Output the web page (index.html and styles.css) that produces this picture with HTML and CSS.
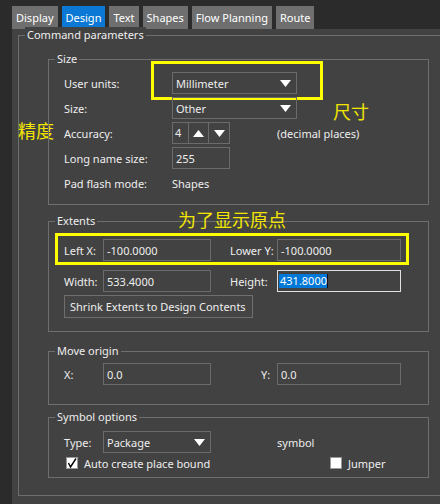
FILE: index.html
```html
<!DOCTYPE html>
<html lang="en">
<head>
    <meta charset="UTF-8">
    <meta name="viewport" content="width=device-width, initial-scale=1.0">
    <title>Design Options</title>
    <link rel="stylesheet" href="styles.css">
</head>
<body>
    <div class="tabs">
        <div class="tab">Display</div>
        <div class="tab active">Design</div>
        <div class="tab">Text</div>
        <div class="tab">Shapes</div>
        <div class="tab">Flow Planning</div>
        <div class="tab">Route</div>
    </div>

    <div class="panel">
        <div class="group main-group">
            <span class="group-title">Command parameters</span>
            <span class="note note-accuracy">精度</span>

            <div class="group size-group">
                <span class="group-title">Size</span>
                <div class="highlight units-box"></div>
                <span class="note note-size">尺寸</span>

                <div class="rows">
                    <div class="row">
                        <span class="label">User units:</span>
                        <div class="field dropdown size-field">Millimeter
                            <svg class="arrow" width="11" height="7" viewBox="0 0 11 7"><polygon points="0,0 11,0 5.5,7" fill="#fff"/></svg>
                        </div>
                    </div>
                    <div class="row">
                        <span class="label">Size:</span>
                        <div class="field dropdown size-field">Other
                            <svg class="arrow" width="11" height="7" viewBox="0 0 11 7"><polygon points="0,0 11,0 5.5,7" fill="#fff"/></svg>
                        </div>
                    </div>
                    <div class="row">
                        <span class="label">Accuracy:</span>
                        <div class="spinner">
                            <span class="spin-value">4</span>
                            <span class="spin-btn"><svg width="11" height="7" viewBox="0 0 11 7"><polygon points="0,7 11,7 5.5,0" fill="#fff"/></svg></span>
                            <span class="spin-btn"><svg width="11" height="7" viewBox="0 0 11 7"><polygon points="0,0 11,0 5.5,7" fill="#fff"/></svg></span>
                        </div>
                        <span class="hint">(decimal places)</span>
                    </div>
                    <div class="row">
                        <span class="label">Long name size:</span>
                        <div class="field short-field">255</div>
                    </div>
                    <div class="row">
                        <span class="label">Pad flash mode:</span>
                        <span>Shapes</span>
                    </div>
                </div>
            </div>

            <div class="group extents-group">
                <span class="group-title">Extents</span>
                <span class="note note-origin">为了显示原点</span>
                <div class="highlight extents-box"></div>

                <div class="row">
                    <span class="label narrow">Left X:</span>
                    <div class="field left-field">-100.0000</div>
                    <span class="label second">Lower Y:</span>
                    <div class="field right-field">-100.0000</div>
                </div>
                <div class="row row-spaced">
                    <span class="label narrow">Width:</span>
                    <div class="field left-field">533.4000</div>
                    <span class="label second">Height:</span>
                    <div class="field right-field focused"><span class="selected">431.8000</span></div>
                </div>
                <button class="shrink-btn">Shrink Extents to Design Contents</button>
            </div>

            <div class="group move-group">
                <span class="group-title">Move origin</span>
                <div class="row">
                    <span class="label narrow">X:</span>
                    <div class="field left-field">0.0</div>
                    <span class="label y-label">Y:</span>
                    <div class="field right-field">0.0</div>
                </div>
            </div>

            <div class="group symbol-group">
                <span class="group-title">Symbol options</span>
                <div class="row">
                    <span class="label narrow">Type:</span>
                    <div class="field dropdown left-field">Package
                        <svg class="arrow" width="11" height="7" viewBox="0 0 11 7"><polygon points="0,0 11,0 5.5,7" fill="#fff"/></svg>
                    </div>
                    <span class="symbol-text">symbol</span>
                </div>
                <div class="check-row">
                    <span class="check-item first">
                        <span class="checkbox"><svg width="12" height="12" viewBox="0 0 12 12"><polyline points="2.5,6 4.5,10 10,1.5" fill="none" stroke="#000" stroke-width="1.4"/></svg></span>
                        Auto create place bound
                    </span>
                    <span class="check-item">
                        <span class="checkbox"></span>
                        Jumper
                    </span>
                </div>
            </div>
        </div>
    </div>
</body>
</html>
```

FILE: styles.css
```css
body {
    margin: 0;
    width: 440px;
    height: 504px;
    overflow: hidden;
    background-color: #2b2b2b;
    font-family: "Noto Sans", "Open Sans", sans-serif;
    font-size: 11px;
    color: #eeeeee;
}
.tabs {
    display: flex;
    gap: 4px;
    padding: 6px 0 0 12px;
    height: 23px;
}
.tab {
    background-color: #6f6f6f;
    color: #fff;
    padding: 0 4px;
    line-height: 23px;
}
.tab.active {
    background-color: #0a78d4;
}
.panel {
    background-color: #424242;
    margin-left: 12px;
    height: 475px;
    box-sizing: border-box;
    padding: 6px 0 0 6px;
}
.group {
    position: relative;
    box-sizing: border-box;
    border: 1px solid #6e6e6e;
}
.group-title {
    position: absolute;
    top: -9px;
    left: 6px;
    padding: 0 2px;
    line-height: 16px;
    background-color: #424242;
    white-space: nowrap;
}
/* right border falls just outside the window */
.main-group {
    width: 423px;
    padding: 23px 0 17px 29px;
}
.size-group {
    width: 381px;
    padding: 12px 0 10px 15px;
}
.extents-group {
    width: 381px;
    margin-top: 16px;
    padding: 17px 0 13px 15px;
}
.move-group {
    width: 381px;
    margin-top: 19px;
    padding: 11px 0 19px 15px;
}
.symbol-group {
    width: 381px;
    margin-top: 12px;
    padding: 13px 0 7px 15px;
}

/* yellow annotations */
.note {
    position: absolute;
    color: #f2e600;
    font-family: "Noto Sans CJK SC", sans-serif;
    font-size: 18px;
    line-height: 20px;
    white-space: nowrap;
}
.note-accuracy { left: -1px; top: 84px; }
.note-size { left: 284px; top: 41px; }
.note-origin { left: 129px; top: -13px; }
.highlight {
    position: absolute;
    box-sizing: border-box;
    border: 3px solid #ffff00;
}
.units-box { left: 102px; top: 1px; width: 172px; height: 39px; }
.extents-box { left: 6px; top: 11px; width: 354px; height: 32px; }

.rows {
    display: flex;
    flex-direction: column;
    gap: 3px;
}
.row {
    display: flex;
    align-items: center;
    height: 22px;
}
.row-spaced {
    margin-top: 9px;
}
.label {
    width: 108px;
    flex-shrink: 0;
    white-space: nowrap;
}
.label.narrow { width: 39px; }
.label.second { width: 47px; margin-left: 19px; }
.label.y-label { width: 16px; margin-left: 50px; }

.field {
    display: flex;
    align-items: center;
    flex-shrink: 0;
    box-sizing: border-box;
    height: 22px;
    border: 1px solid #6b6b6b;
    padding-left: 3px;
    white-space: nowrap;
}
.dropdown {
    position: relative;
}
.dropdown .arrow {
    position: absolute;
    right: 5px;
    top: 7px;
}
.size-field { width: 125px; }
.short-field { width: 58px; }
.left-field { width: 108px; }
.right-field { width: 124px; }
.field.focused {
    border-color: #e0e0e0;
    padding-left: 1px;
}
.selected {
    background-color: #0078d7;
    color: #fff;
    line-height: 14px;
    padding-left: 1px;
    border-right: 1px solid #111;
}

.spinner {
    display: flex;
    box-sizing: border-box;
    width: 58px;
    height: 22px;
    border: 1px solid #6b6b6b;
}
.spin-value {
    width: 15px;
    padding-left: 2px;
    box-sizing: border-box;
    line-height: 20px;
}
.spin-btn {
    display: flex;
    align-items: center;
    justify-content: center;
    width: 20px;
    border-left: 1px solid #6b6b6b;
}
.hint {
    margin-left: 47px;
}

.shrink-btn {
    display: block;
    margin-top: 3px;
    width: 189px;
    height: 23px;
    padding: 0 0 0 5px;
    text-align: left;
    white-space: nowrap;
    background-color: #444444;
    border: 1px solid #6e6e6e;
    color: #eeeeee;
    font-family: inherit;
    font-size: inherit;
}

.symbol-text {
    margin-left: 66px;
}
.check-row {
    display: flex;
    align-items: center;
    height: 14px;
    margin-top: 3px;
}
.check-item {
    display: flex;
    align-items: center;
    gap: 6px;
    white-space: nowrap;
}
.check-item.first {
    width: 264px;
    flex-shrink: 0;
    margin-left: 2px;
}
.checkbox {
    display: block;
    width: 12px;
    height: 12px;
    box-sizing: border-box;
    background-color: #fff;
    border: 1px solid #999;
}
.checkbox svg {
    display: block;
    margin: -1px;
}
```
